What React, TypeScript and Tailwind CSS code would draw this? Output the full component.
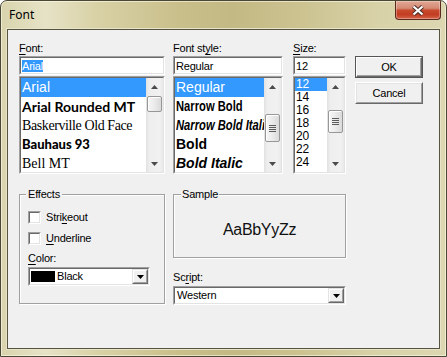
import React from "react";

function U({ children }: { children: React.ReactNode }) {
  return <span className="underline underline-offset-[2px] decoration-1">{children}</span>;
}

function Sunken({
  className,
  inner,
  children,
}: {
  className: string;
  inner?: string;
  children?: React.ReactNode;
}) {
  return (
    <div
      className={
        "border border-t-[#a0a0a0] border-l-[#a0a0a0] border-r-white border-b-white " + className
      }
    >
      <div
        className={
          "h-full border border-t-[#696969] border-l-[#696969] border-r-[#e3e3e3] border-b-[#e3e3e3] bg-white " +
          (inner ?? "")
        }
      >
        {children}
      </div>
    </div>
  );
}

function Arrow({ down, color }: { down?: boolean; color?: string }) {
  return (
    <svg width="7" height="4" viewBox="0 0 7 4" className="block">
      <path d={down ? "M0 0H7L3.5 4Z" : "M0 4H7L3.5 0Z"} fill={color ?? "#4b4b4b"} />
    </svg>
  );
}

function Grip() {
  return (
    <div className="flex flex-col gap-[1px]">
      <div className="w-[7px] h-[1px] bg-[#5c5c5c]" />
      <div className="w-[7px] h-[1px] bg-[#5c5c5c]" />
      <div className="w-[7px] h-[1px] bg-[#5c5c5c]" />
      <div className="w-[7px] h-[1px] bg-[#5c5c5c]" />
    </div>
  );
}

function VScroll({ thumb, grip }: { thumb: string; grip?: boolean }) {
  return (
    <div className="w-[17px] h-full shrink-0 flex flex-col bg-[linear-gradient(90deg,#e2e2e2,#eeeeee_20%,#f1f1f1_80%,#e9e9e9)]">
      <div className="h-[17px] shrink-0 flex items-center justify-center">
        <Arrow />
      </div>
      <div className="flex-1 px-[1px]">
        <div
          className={
            "rounded-[2px] border border-[#979797] bg-[linear-gradient(90deg,#f6f6f6,#ececec_45%,#dadada)] shadow-[inset_1px_1px_0_#ffffff] flex items-center justify-center " +
            thumb
          }
        >
          {grip && <Grip />}
        </div>
      </div>
      <div className="h-[17px] shrink-0 flex items-center justify-center">
        <Arrow down />
      </div>
    </div>
  );
}

function Raised({ className, children }: { className: string; children?: React.ReactNode }) {
  return (
    <div
      className={
        "border border-t-[#e3e3e3] border-l-[#e3e3e3] border-r-[#696969] border-b-[#696969] " + className
      }
    >
      <div className="h-full border border-t-white border-l-white border-r-[#a0a0a0] border-b-[#a0a0a0] bg-[#f0f0f0] flex items-center justify-center">
        {children}
      </div>
    </div>
  );
}

function Combo({ className, children }: { className: string; children: React.ReactNode }) {
  return (
    <Sunken className={className} inner="flex items-center">
      {children}
      <Raised className="ml-auto w-[16px] h-full shrink-0">
        <Arrow down color="#000000" />
      </Raised>
    </Sunken>
  );
}

export default function App() {
  return (
    <div className="w-[447px] h-[357px] bg-white">
      <div className="w-[447px] h-[357px] flex flex-col rounded-t-[7px] border border-[#4a4735] overflow-hidden bg-[linear-gradient(90deg,#d9d4ad_0%,#e6e2c6_10%,#d8d1a5_22%,#c9bf8b_40%,#c3b984_52%,#ccc391_68%,#d8d2a8_85%,#dcd7b1_100%)] shadow-[inset_0_0_0_1px_rgba(255,255,240,0.55)]">
        {/* Title bar */}
        <div className="h-[28px] shrink-0 flex items-start pl-[8px] pr-[5px]">
          <div className="pt-[6px] font-['Noto_Sans',sans-serif] text-[12px] leading-[16px] text-black">
            Font
          </div>
          <div className="ml-auto w-[46px] h-[19px] rounded-b-[4px] border border-t-0 border-[#5a2a1f] bg-[linear-gradient(180deg,#e0a795_0%,#d58a74_40%,#c84a2d_52%,#c23d21_75%,#d6654a_100%)] shadow-[inset_0_0_0_1px_rgba(255,255,255,0.3)] flex items-center justify-center">
            <svg width="14" height="11" viewBox="0 0 14 11" className="block">
              <path d="M2.5 1.5L11.5 9.5M11.5 1.5L2.5 9.5" stroke="#4a2f28" strokeWidth="4.2" />
              <path d="M2.5 1.5L11.5 9.5M11.5 1.5L2.5 9.5" stroke="#ffffff" strokeWidth="2.2" />
            </svg>
          </div>
        </div>

        {/* Client area */}
        <div className="flex-1 flex flex-col px-[6px] pb-[7px]">
          <div className="flex-1 border border-[#56533f] bg-[#f0f0f0] shadow-[0_0_0_1px_#e8e4c9] pl-[11px] pt-[12px] font-['Liberation_Sans',Arial,sans-serif] text-[11px] leading-[13px] tracking-[-0.2px] text-black">
            {/* Top row */}
            <div className="flex items-start">
              {/* Font */}
              <div className="w-[146px] flex flex-col">
                <div className="h-[13px]">
                  <U>F</U>ont:
                </div>
                <Sunken className="mt-[1px] h-[19px]" inner="flex items-center pl-[1px]">
                  <span className="bg-[#3399ff] text-white leading-[12px]">Arial</span>
                </Sunken>
                <Sunken className="mt-[1px] h-[98px]" inner="flex overflow-hidden">
                  <div className="flex-1 min-w-0 overflow-hidden flex flex-col whitespace-nowrap tracking-normal">
                    <div className="h-[19px] shrink-0 pl-[1px] bg-[#3399ff] text-white text-[14px] leading-[19px] font-['Liberation_Sans',Arial,sans-serif]">
                      Arial
                    </div>
                    <div className="h-[19px] shrink-0 pl-[1px] text-[14px] leading-[19px] font-bold font-['Lato',sans-serif]">
                      Arial Rounded MT
                    </div>
                    <div className="h-[19px] shrink-0 pl-[1px] text-[14px] leading-[19px] tracking-[-0.4px] font-['Liberation_Serif',serif]">
                      Baskerville Old Face
                    </div>
                    <div className="h-[19px] shrink-0 pl-[1px] text-[13px] leading-[19px] font-black font-['Lato',sans-serif]">
                      Bauhaus 93
                    </div>
                    <div className="h-[19px] shrink-0 pl-[1px] text-[14px] leading-[19px] font-['Liberation_Serif',serif]">
                      Bell MT
                    </div>
                  </div>
                  <VScroll thumb="mt-[1px] h-[16px]" />
                </Sunken>
              </div>

              {/* Font style */}
              <div className="ml-[8px] w-[110px] flex flex-col">
                <div className="h-[13px]">
                  Font st<U>y</U>le:
                </div>
                <Sunken className="mt-[1px] h-[19px]" inner="flex items-center pl-[1px]">
                  <span className="leading-[12px]">Regular</span>
                </Sunken>
                <Sunken className="mt-[1px] h-[98px]" inner="flex overflow-hidden">
                  <div className="flex-1 min-w-0 overflow-hidden flex flex-col whitespace-nowrap tracking-normal text-[14px] leading-[19px]">
                    <div className="h-[19px] shrink-0 pl-[1px] bg-[#3399ff] text-white">Regular</div>
                    <div className="h-[19px] shrink-0 pl-[1px] font-bold">
                      <span className="inline-block scale-x-[0.8] origin-left">Narrow Bold</span>
                    </div>
                    <div className="h-[19px] shrink-0 pl-[1px] font-bold italic">
                      <span className="inline-block scale-x-[0.8] origin-left">Narrow Bold Italic</span>
                    </div>
                    <div className="h-[19px] shrink-0 pl-[1px] font-bold">Bold</div>
                    <div className="h-[19px] shrink-0 pl-[1px] font-bold italic">Bold Italic</div>
                  </div>
                  <VScroll thumb="mt-[19px] h-[28px]" grip />
                </Sunken>
              </div>

              {/* Size */}
              <div className="ml-[10px] w-[53px] flex flex-col">
                <div className="h-[13px]">
                  <U>S</U>ize:
                </div>
                <Sunken className="mt-[1px] h-[19px]" inner="flex items-center pl-[1px]">
                  <span className="leading-[12px]">12</span>
                </Sunken>
                <Sunken className="mt-[1px] h-[98px]" inner="flex overflow-hidden">
                  <div className="flex-1 min-w-0 overflow-hidden flex flex-col text-[12px] leading-[13px] tracking-[-0.2px]">
                    <div className="h-[13px] shrink-0 pl-[1px] bg-[#3399ff] text-white">12</div>
                    <div className="h-[13px] shrink-0 pl-[1px]">14</div>
                    <div className="h-[13px] shrink-0 pl-[1px]">16</div>
                    <div className="h-[13px] shrink-0 pl-[1px]">18</div>
                    <div className="h-[13px] shrink-0 pl-[1px]">20</div>
                    <div className="h-[13px] shrink-0 pl-[1px]">22</div>
                    <div className="h-[13px] shrink-0 pl-[1px]">24</div>
                  </div>
                  <VScroll thumb="mt-[15px] h-[23px]" grip />
                </Sunken>
              </div>

              {/* Buttons */}
              <div className="ml-[9px] w-[68px] pt-[14px] flex flex-col">
                <div className="h-[22px] border border-[#555555]">
                  <div className="h-full border border-t-white border-l-white border-r-[#696969] border-b-[#696969] shadow-[inset_-1px_-1px_0_#a0a0a0] flex items-center justify-center">
                    OK
                  </div>
                </div>
                <div className="mt-[4px] h-[22px] border border-t-white border-l-white border-r-[#696969] border-b-[#696969]">
                  <div className="h-full border border-t-[#e3e3e3] border-l-[#e3e3e3] border-r-[#a0a0a0] border-b-[#a0a0a0] flex items-center justify-center">
                    Cancel
                  </div>
                </div>
              </div>
            </div>

            {/* Bottom row */}
            <div className="mt-[14px] flex items-start">
              {/* Effects */}
              <div className="w-[146px] pt-[6px]">
                <div className="relative h-[110px] border border-[#a0a0a0] shadow-[inset_1px_1px_0_#ffffff,1px_1px_0_#ffffff] pl-[8px] pt-[16px] flex flex-col">
                  <span className="absolute left-[6px] top-[-7px] px-[2px] bg-[#f0f0f0] leading-[13px]">
                    Effects
                  </span>
                  <div className="h-[13px] flex items-center">
                    <Sunken className="w-[13px] h-[13px] shrink-0" />
                    <span className="ml-[5px]">
                      Stri<U>k</U>eout
                    </span>
                  </div>
                  <div className="mt-[8px] h-[13px] flex items-center">
                    <Sunken className="w-[13px] h-[13px] shrink-0" />
                    <span className="ml-[5px]">
                      <U>U</U>nderline
                    </span>
                  </div>
                  <div className="mt-[7px] h-[13px]">
                    <U>C</U>olor:
                  </div>
                  <Combo className="mt-[2px] w-[122px] h-[19px]">
                    <div className="ml-[1px] w-[24px] h-[11px] bg-black shrink-0" />
                    <span className="ml-[2px]">Black</span>
                  </Combo>
                </div>
              </div>

              {/* Sample + Script */}
              <div className="ml-[8px] w-[173px] flex flex-col">
                <div className="pt-[6px]">
                  <div className="relative h-[64px] border border-[#a0a0a0] shadow-[inset_1px_1px_0_#ffffff,1px_1px_0_#ffffff] pt-[26px] flex justify-center">
                    <span className="absolute left-[7px] top-[-7px] px-[1px] bg-[#f0f0f0] leading-[13px]">
                      Sample
                    </span>
                    <span className="text-[16px] leading-[18px] tracking-[-0.3px] text-[#111111]">
                      AaBbYyZz
                    </span>
                  </div>
                </div>
                <div className="mt-[13px] h-[13px]">
                  Sc<U>r</U>ipt:
                </div>
                <Combo className="mt-[2px] w-[173px] h-[19px]">
                  <span className="ml-[2px]">Western</span>
                </Combo>
              </div>
            </div>
          </div>
        </div>
      </div>
    </div>
  );
}
